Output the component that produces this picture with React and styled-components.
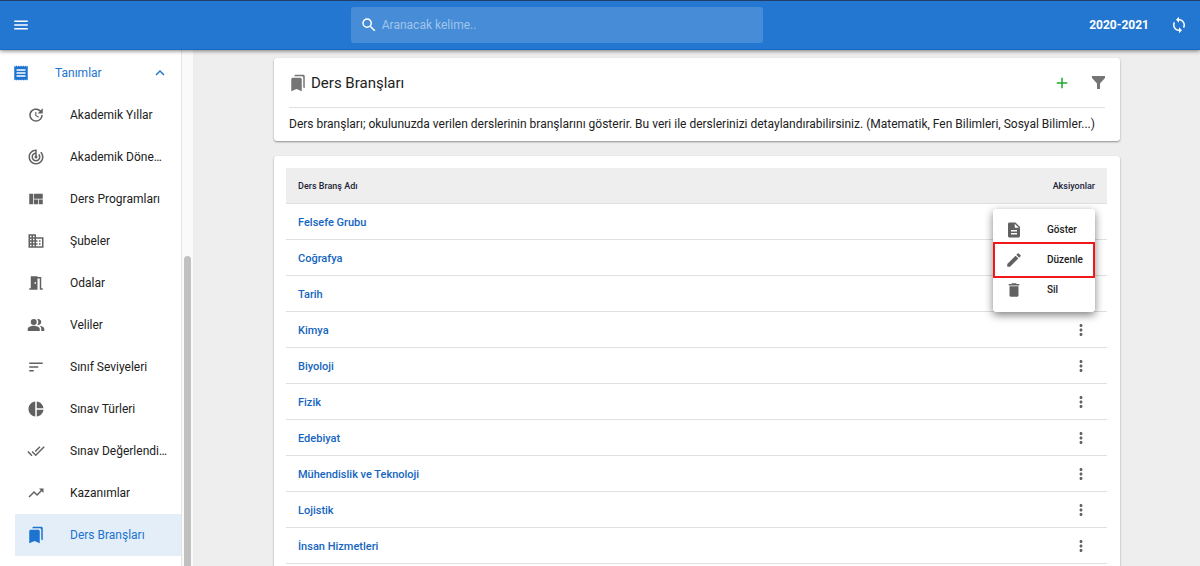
import React, { useState } from "react";
import styled, { createGlobalStyle } from "styled-components";
import {
  MdAdd,
  MdBookmarks,
  MdCreate,
  MdDelete,
  MdDescription,
  MdDomain,
  MdDoneAll,
  MdExpandLess,
  MdLoop,
  MdMeetingRoom,
  MdMenu,
  MdMoreVert,
  MdPeopleAlt,
  MdPieChart,
  MdReceipt,
  MdSearch,
  MdSort,
  MdTrackChanges,
  MdTrendingUp,
  MdUpdate,
  MdViewQuilt,
} from "react-icons/md";

const menuItems = [
  { label: "Akademik Yıllar", icon: MdUpdate },
  { label: "Akademik Dönemler", icon: MdTrackChanges },
  { label: "Ders Programları", icon: MdViewQuilt },
  { label: "Şubeler", icon: MdDomain },
  { label: "Odalar", icon: MdMeetingRoom },
  { label: "Veliler", icon: MdPeopleAlt },
  { label: "Sınıf Seviyeleri", icon: MdSort },
  { label: "Sınav Türleri", icon: MdPieChart },
  { label: "Sınav Değerlendirme", icon: MdDoneAll },
  { label: "Kazanımlar", icon: MdTrendingUp },
  { label: "Ders Branşları", icon: MdBookmarks, active: true },
];

const branches = [
  "Felsefe Grubu",
  "Coğrafya",
  "Tarih",
  "Kimya",
  "Biyoloji",
  "Fizik",
  "Edebiyat",
  "Mühendislik ve Teknoloji",
  "Lojistik",
  "İnsan Hizmetleri",
];

const actions = [
  { label: "Göster", icon: MdDescription },
  { label: "Düzenle", icon: MdCreate, marked: true },
  { label: "Sil", icon: MdDelete },
];

const FilterIcon = () => (
  <svg width="13" height="13" viewBox="0 0 13 13" fill="currentColor">
    <path d="M0 0h13v2L8 7.5V13H5V7.5L0 2z" />
  </svg>
);

const RowMenu = () => (
  <Menu role="menu">
    {actions.map(({ label, icon: Icon, marked }) => (
      <MenuButton key={label} type="button" role="menuitem" $marked={marked}>
        <Icon size={18} />
        {label}
      </MenuButton>
    ))}
  </Menu>
);

const Sidebar = () => {
  const [open, setOpen] = useState(true);

  return (
    <SidebarWrap>
      <Nav>
        <GroupButton type="button" onClick={() => setOpen(!open)}>
          <MdReceipt size={18} />
          <span>Tanımlar</span>
          <MdExpandLess size={18} />
        </GroupButton>
        {open
          ? menuItems.map(({ label, icon: Icon, active }) => (
              <NavLink key={label} href="#" $active={active}>
                <Icon size={18} />
                <span>{label}</span>
              </NavLink>
            ))
          : null}
      </Nav>
      <ScrollTrack>
        <ScrollThumb />
      </ScrollTrack>
    </SidebarWrap>
  );
};

const App = () => {
  const [search, setSearch] = useState("");
  const [openRow, setOpenRow] = useState("Felsefe Grubu");

  return (
    <Page>
      <GlobalStyle />
      <Header>
        <IconButton type="button" aria-label="Menü">
          <MdMenu size={18} />
        </IconButton>
        <SearchBox>
          <MdSearch size={18} />
          <input
            type="text"
            aria-label="Ara"
            placeholder="Aranacak kelime.."
            value={search}
            onChange={(e) => setSearch(e.target.value)}
          />
        </SearchBox>
        <HeaderRight>
          <YearButton type="button">2020-2021</YearButton>
          <IconButton type="button" aria-label="Yenile">
            <MdLoop size={18} />
          </IconButton>
        </HeaderRight>
      </Header>
      <Body>
        <Sidebar />
        <Main>
          <TitleCard>
            <TitleRow>
              <MdBookmarks size={18} />
              <h1>Ders Branşları</h1>
              <IconButton type="button" aria-label="Ekle" $color="#1fa82f">
                <MdAdd size={18} />
              </IconButton>
              <IconButton type="button" aria-label="Filtrele" $color="#757575">
                <FilterIcon />
              </IconButton>
            </TitleRow>
            <Description>
              Ders branşları; okulunuzda verilen derslerinin branşlarını
              gösterir. Bu veri ile derslerinizi detaylandırabilirsiniz.
              (Matematik, Fen Bilimleri, Sosyal Bilimler...)
            </Description>
          </TitleCard>
          <TableCard>
            <Table>
              <thead>
                <tr>
                  <th>Ders Branş Adı</th>
                  <th>Aksiyonlar</th>
                </tr>
              </thead>
              <tbody>
                {branches.map((branch) => (
                  <tr key={branch}>
                    <td>
                      <a href="#">{branch}</a>
                    </td>
                    <td>
                      <ActionCell>
                        <IconButton
                          type="button"
                          aria-label={`${branch} aksiyonları`}
                          $color="#616161"
                          onClick={() =>
                            setOpenRow(openRow === branch ? "" : branch)
                          }
                        >
                          <MdMoreVert size={18} />
                        </IconButton>
                        {openRow === branch ? <RowMenu /> : null}
                      </ActionCell>
                    </td>
                  </tr>
                ))}
              </tbody>
            </Table>
          </TableCard>
        </Main>
      </Body>
    </Page>
  );
};

export default App;

const GlobalStyle = createGlobalStyle`
* {
  box-sizing: border-box;
}
body {
  margin: 0;
  background-color: #eeeeee;
  color: #212121;
  font-family: Roboto, "Liberation Sans", sans-serif;
  font-size: 12px;
}
button, input {
  font-family: inherit;
}
svg {
  display: block;
  flex-shrink: 0;
}
`;

const Page = styled.div`
  display: flex;
  flex-direction: column;
  height: 100vh;
  overflow: hidden;
`;

const Header = styled.header`
  position: relative;
  z-index: 2;
  display: grid;
  grid-template-columns: 4fr minmax(120px, 412px) 5fr;
  align-items: center;
  flex-shrink: 0;
  height: 50px;
  padding-left: 1px;
  border-top: 1px solid #223f6c;
  border-bottom: 1px solid #1669c5;
  background-color: #2377d0;
  color: white;
  box-shadow: 0 1px 4px rgba(0, 0, 0, 0.5);
  > button {
    margin-left: 11px;
  }
`;

const IconButton = styled.button`
  display: flex;
  justify-self: start;
  padding: 0;
  border: 0;
  background: none;
  color: ${({ $color }) => $color || "white"};
  cursor: pointer;
`;

const SearchBox = styled.div`
  display: flex;
  align-items: center;
  gap: 4px;
  height: 36px;
  padding: 0 9px;
  border-radius: 3px;
  background-color: rgba(255, 255, 255, 0.16);
  input {
    flex: 1;
    min-width: 0;
    padding: 0;
    border: 0;
    outline: 0;
    background: none;
    color: white;
    font-size: 12px;
  }
  input::placeholder {
    color: #a0c5eb;
    opacity: 1;
  }
`;

const HeaderRight = styled.div`
  display: flex;
  align-items: center;
  justify-content: flex-end;
  gap: 21px;
  padding-right: 12px;
`;

const YearButton = styled.button`
  padding: 0;
  border: 0;
  background: none;
  color: white;
  font-size: 12px;
  font-weight: 700;
`;

const Body = styled.div`
  display: flex;
  flex: 1;
  min-height: 0;
`;

const SidebarWrap = styled.aside`
  display: flex;
  flex-shrink: 0;
  width: 193px;
  background-color: white;
`;

const Nav = styled.nav`
  flex: 1;
  min-width: 0;
  padding-top: 2px;
  overflow: hidden;
`;

const GroupButton = styled.button`
  display: flex;
  align-items: center;
  width: 100%;
  height: 42px;
  padding: 0 12px;
  border: 0;
  background: none;
  color: #1c73d0;
  font-size: 12px;
  text-align: left;
  span {
    flex: 1;
    margin-left: 25px;
  }
`;

const NavLink = styled.a`
  display: flex;
  align-items: center;
  gap: 25px;
  height: 42px;
  margin-left: 15px;
  padding: 0 12px;
  background-color: ${({ $active }) => ($active ? "#e4eef9" : "transparent")};
  color: ${({ $active }) => ($active ? "#1c73d0" : "#212121")};
  text-decoration: none;
  svg {
    color: ${({ $active }) => ($active ? "#1c73d0" : "#616161")};
  }
  span {
    overflow: hidden;
    text-overflow: ellipsis;
    white-space: nowrap;
  }
`;

const ScrollTrack = styled.div`
  display: flex;
  flex-direction: column;
  justify-content: flex-end;
  width: 12px;
  padding: 0 2px;
  border-left: 1px solid #e4e4e4;
  background-color: #fafafa;
`;

const ScrollThumb = styled.div`
  height: 60%;
  border-radius: 4px 4px 0 0;
  background-color: #c1c1c1;
`;

const Main = styled.main`
  display: flex;
  flex-direction: column;
  gap: 15px;
  flex: 1;
  min-width: 0;
  padding: 8px 80px 8px 81px;
  overflow: hidden;
`;

const Card = styled.section`
  flex-shrink: 0;
  border-radius: 3px;
  background-color: white;
  box-shadow: 0 1px 2px rgba(0, 0, 0, 0.4);
`;

const TitleCard = styled(Card)`
  padding: 0 15px;
`;

const TitleRow = styled.div`
  display: flex;
  align-items: center;
  height: 50px;
  border-bottom: 1px solid #e0e0e0;
  color: #757575;
  h1 {
    flex: 1;
    margin: 0 0 0 4px;
    color: #212121;
    font-size: 15px;
    font-weight: 400;
  }
  button + button {
    margin-left: 21px;
  }
`;

const Description = styled.p`
  margin: 0;
  padding: 8px 0;
  font-size: 12px;
  line-height: 17px;
`;

const TableCard = styled(Card)`
  padding: 12px 13px 24px 12px;
`;

const Table = styled.table`
  width: 100%;
  border-collapse: separate;
  border-spacing: 0;
  th,
  td {
    height: 36px;
    padding: 0 12px;
    border-bottom: 1px solid #e0e0e0;
    text-align: left;
  }
  th {
    background-color: #eeeeee;
    color: #1c2438;
    font-size: 9px;
    font-weight: 500;
  }
  th:last-child {
    text-align: right;
  }
  a {
    color: #1465c0;
    font-size: 11px;
    font-weight: 500;
    text-decoration: none;
  }
`;

const ActionCell = styled.div`
  position: relative;
  display: flex;
  justify-content: flex-end;
  padding-right: 5px;
`;

const Menu = styled.div`
  position: absolute;
  top: -4px;
  right: 0;
  z-index: 1;
  width: 102px;
  padding: 6px 0 7px;
  border-radius: 3px;
  background-color: white;
  box-shadow: 0 3px 8px rgba(0, 0, 0, 0.5);
`;

const MenuButton = styled.button`
  display: flex;
  align-items: center;
  gap: 24px;
  width: 100%;
  height: ${({ $marked }) => ($marked ? "36px" : "30px")};
  margin: ${({ $marked }) => ($marked ? "-3px 0" : "0")};
  padding: 0 0 0 ${({ $marked }) => ($marked ? "10px" : "12px")};
  border: ${({ $marked }) => ($marked ? "2px solid #f01818" : "0")};
  background: none;
  color: #212121;
  font-size: 10px;
  font-weight: 500;
  svg {
    color: #616161;
  }
`;
